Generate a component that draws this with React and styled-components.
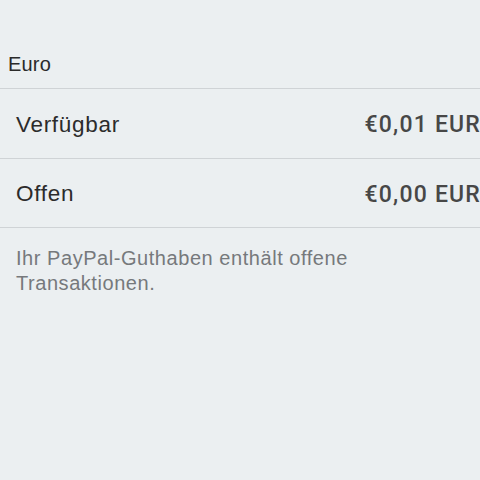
import React from 'react';
import styled, { createGlobalStyle } from 'styled-components';

const GlobalStyle = createGlobalStyle`
  html, body {
    margin: 0;
    padding: 0;
    background: #ebeff1;
  }
  body {
    font-family: "Liberation Sans", Arial, sans-serif;
    -webkit-font-smoothing: antialiased;
  }
`;

const balances = [
  { label: 'Verfügbar', amount: '€0,01 EUR' },
  { label: 'Offen', amount: '€0,00 EUR' },
];

const App = () => (
  <>
    <GlobalStyle />
    <Screen>
      <SectionHeader>Euro</SectionHeader>
      <List>
        {balances.map((b) => (
          <Row key={b.label}>
            <Label>{b.label}</Label>
            <Amount>{b.amount}</Amount>
          </Row>
        ))}
      </List>
      <Note>Ihr PayPal-Guthaben enthält offene Transaktionen.</Note>
    </Screen>
  </>
);

export default App;

const Screen = styled.div`
  width: 480px;
  height: 480px;
  overflow: hidden;
  background: #ebeff1;
  padding-top: 50px;
  box-sizing: border-box;
`;

const SectionHeader = styled.div`
  padding: 0 8px;
  height: 38px;
  font-size: 20px;
  font-weight: 300;
  color: #2a2a2a;
  line-height: 28px;
  letter-spacing: 0.2px;
`;

const List = styled.div`
  border-top: 1px solid #cfd3d6;
`;

const Row = styled.div`
  display: flex;
  align-items: center;
  justify-content: space-between;
  height: 69.5px;
  padding: 3px 0 0 16px;
  box-sizing: border-box;
  border-bottom: 1px solid #cfd3d6;
`;

const Label = styled.span`
  font-size: 22.5px;
  letter-spacing: 0.7px;
  color: #2b2b2b;
`;

const Amount = styled.span`
  font-family: Roboto, "Liberation Sans", sans-serif;
  font-size: 23px;
  font-weight: 500;
  letter-spacing: 1.2px;
  color: #474747;
  margin-right: -1px;
  white-space: nowrap;
`;

const Note = styled.p`
  margin: 0;
  padding: 18px 100px 0 16px;
  font-size: 20px;
  line-height: 25px;
  letter-spacing: 0.55px;
  color: #76797c;
`;
